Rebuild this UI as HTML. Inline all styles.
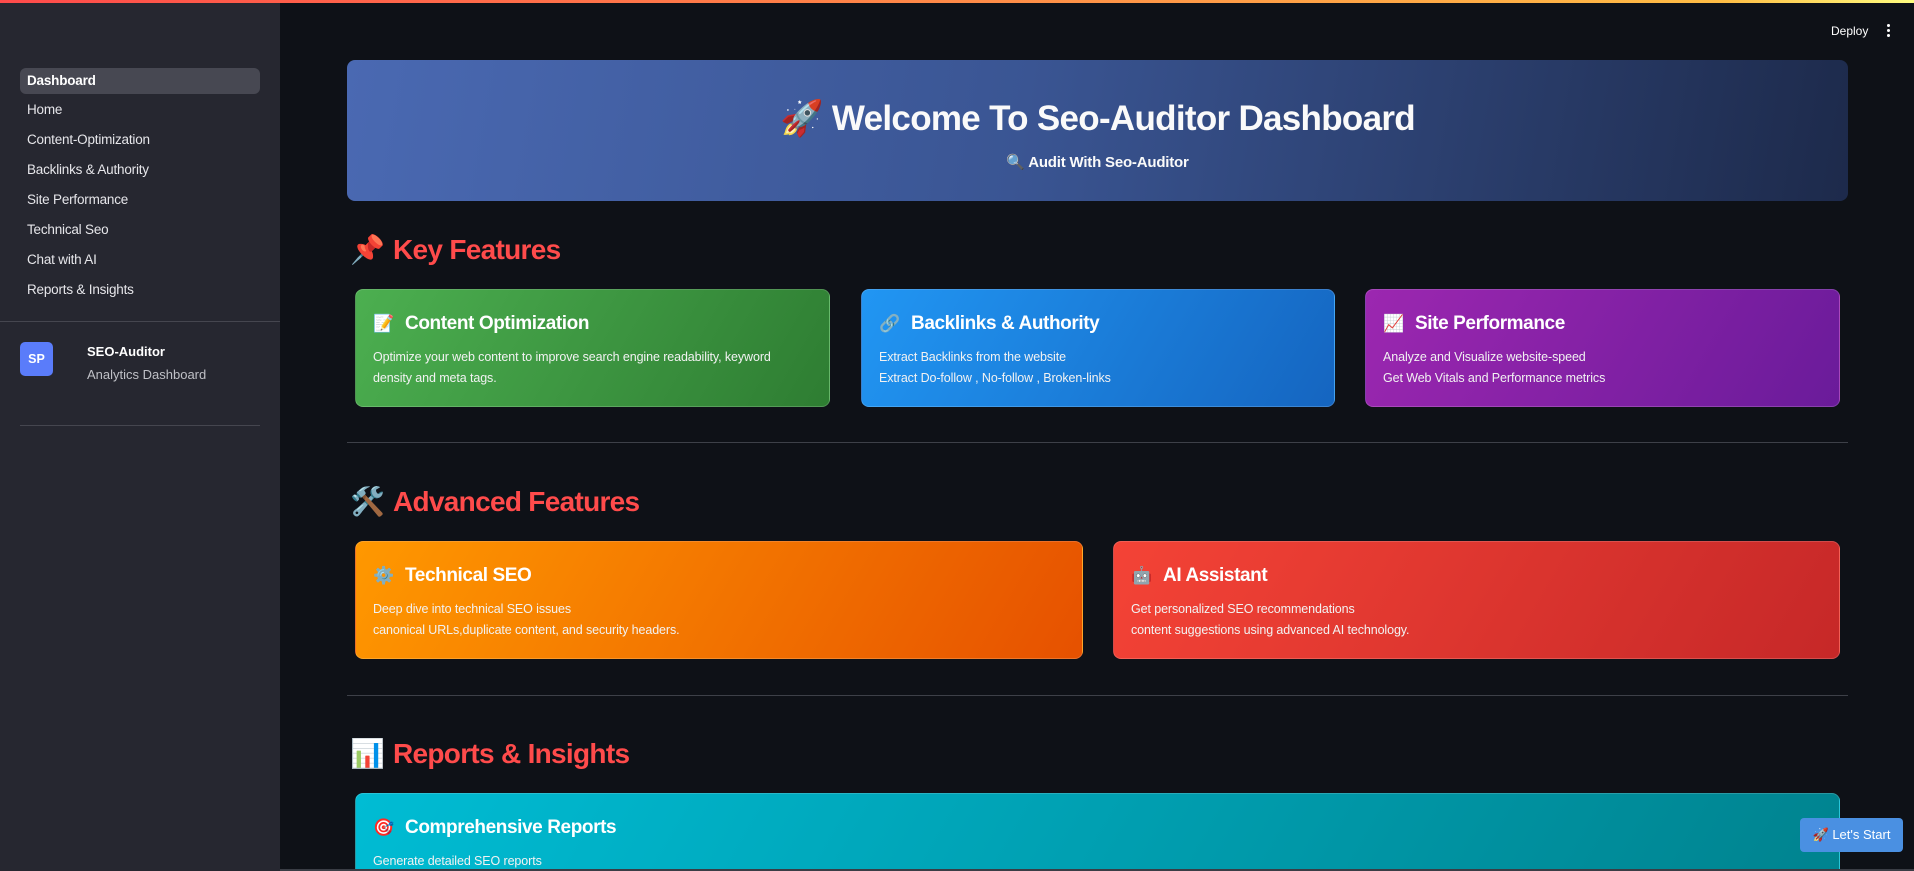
<!DOCTYPE html>
<html><head><meta charset="utf-8"><style>
*{box-sizing:border-box;margin:0;padding:0}
html,body{width:1914px;height:871px;overflow:hidden;background:#0e1117;font-family:"Liberation Sans","Noto Sans CJK SC",sans-serif;color:#fafafa;position:relative}
.topline{position:absolute;left:0;top:0;width:1914px;height:3px;background:linear-gradient(90deg,#ff4b4b,#ffbd45 90%,#fffd80)}
.side{position:absolute;left:0;top:0;width:280px;height:871px;background:#262730}
.nav{position:absolute;left:20px;width:240px;height:26px;border-radius:6px;font-size:13.5px;line-height:26px;padding-left:7px;color:#e6e6ea;letter-spacing:-0.2px}
.nav.act{background:#474852;font-weight:bold;color:#fff}
.hr{position:absolute;height:1px;background:#45464f}
.av{position:absolute;left:20px;top:342px;width:33px;height:34px;border-radius:5px;background:#5a7cfa;color:#fff;font-weight:bold;font-size:12.5px;text-align:center;line-height:34px}
.hero{position:absolute;left:347px;top:60px;width:1501px;height:141px;border-radius:8px;background:linear-gradient(100deg,#4a69b2 0%,#3a5593 45%,#1d2a4b 100%);text-align:center}
.hero h1{font-size:35px;font-weight:bold;letter-spacing:-0.7px;margin-top:37px;line-height:44px}
.hero p{font-size:15px;font-weight:bold;margin-top:12px;letter-spacing:-0.2px}
.sec{position:absolute;left:350px;font-size:28px;font-weight:bold;color:#ff4b4b;letter-spacing:-0.7px;line-height:34px}
.sec span{display:inline-block;width:43px}
.card{position:absolute;border-radius:8px;border:1px solid rgba(255,255,255,0.16);padding:0 0 0 17px;color:#fff;overflow:hidden}
.card h3{font-size:19px;font-weight:bold;margin-top:22px;line-height:24px;letter-spacing:-0.4px}
.card h3 span{display:inline-block;width:32px;font-size:17px}
.card p{font-size:12.5px;line-height:20.5px;margin-top:11px;color:#f2f2f2;letter-spacing:-0.1px}
.divider{position:absolute;left:347px;width:1501px;height:1px;background:#3d4048}
</style></head><body>
<div class="side">
 <div class="nav act" style="top:68px">Dashboard</div>
 <div class="nav" style="top:97px">Home</div>
 <div class="nav" style="top:127px">Content-Optimization</div>
 <div class="nav" style="top:157px">Backlinks &amp; Authority</div>
 <div class="nav" style="top:187px">Site Performance</div>
 <div class="nav" style="top:217px">Technical Seo</div>
 <div class="nav" style="top:247px">Chat with AI</div>
 <div class="nav" style="top:277px">Reports &amp; Insights</div>
 <div class="hr" style="left:0;width:280px;top:321px"></div>
 <div class="av">SP</div>
 <div style="position:absolute;left:87px;top:344px;font-size:13px;font-weight:bold;color:#fff">SEO-Auditor</div>
 <div style="position:absolute;left:87px;top:367px;font-size:13px;color:#bfc0c6">Analytics Dashboard</div>
 <div class="hr" style="left:20px;width:240px;top:425px"></div>
</div>
<div class="topline"></div>
<div style="position:absolute;left:1831px;top:24px;font-size:12px;color:#fff">Deploy</div>
<div style="position:absolute;left:1887px;top:24px;width:3px">
 <div style="width:3px;height:3px;background:#fff;border-radius:2px;margin-bottom:2px"></div>
 <div style="width:3px;height:3px;background:#fff;border-radius:2px;margin-bottom:2px"></div>
 <div style="width:3px;height:3px;background:#fff;border-radius:2px"></div>
</div>

<div class="hero"><h1>🚀 Welcome To Seo-Auditor Dashboard</h1><p>🔍 Audit With Seo-Auditor</p></div>

<div class="sec" style="top:233px"><span>📌</span>Key Features</div>
<div class="card" style="left:355px;top:289px;width:475px;height:118px;background:linear-gradient(120deg,#4caf50,#2e7d32)"><h3><span>📝</span>Content Optimization</h3><p>Optimize your web content to improve search engine readability, keyword<br>density and meta tags.</p></div>
<div class="card" style="left:861px;top:289px;width:474px;height:118px;background:linear-gradient(120deg,#2196f3,#1565c0)"><h3><span>🔗</span>Backlinks &amp; Authority</h3><p>Extract Backlinks from the website<br>Extract Do-follow , No-follow , Broken-links</p></div>
<div class="card" style="left:1365px;top:289px;width:475px;height:118px;background:linear-gradient(120deg,#9c27b0,#6a1b9a)"><h3><span>📈</span>Site Performance</h3><p>Analyze and Visualize website-speed<br>Get Web Vitals and Performance metrics</p></div>
<div class="divider" style="top:442px"></div>

<div class="sec" style="top:485px"><span>🛠️</span>Advanced Features</div>
<div class="card" style="left:355px;top:541px;width:728px;height:118px;background:linear-gradient(120deg,#ff9800,#e65100)"><h3><span>⚙️</span>Technical SEO</h3><p>Deep dive into technical SEO issues<br>canonical URLs,duplicate content, and security headers.</p></div>
<div class="card" style="left:1113px;top:541px;width:727px;height:118px;background:linear-gradient(120deg,#f44336,#c62828)"><h3><span>🤖</span>AI Assistant</h3><p>Get personalized SEO recommendations<br>content suggestions using advanced AI technology.</p></div>
<div class="divider" style="top:695px"></div>

<div class="sec" style="top:737px"><span>📊</span>Reports &amp; Insights</div>
<div class="card" style="left:355px;top:793px;width:1485px;height:76px;border-bottom:none;border-radius:8px 8px 0 0;background:linear-gradient(120deg,#00bcd4,#00838f)"><h3><span>🎯</span>Comprehensive Reports</h3><p>Generate detailed SEO reports</p></div>

<div style="position:absolute;left:1800px;top:818px;width:103px;height:34px;border-radius:4px;background:#4a90e2;color:#fff;font-size:13px;line-height:34px;text-align:center">🚀 Let's Start</div>
<div style="position:absolute;left:280px;top:869px;width:1634px;height:2px;background:#3a3d45"></div>
</body></html>
